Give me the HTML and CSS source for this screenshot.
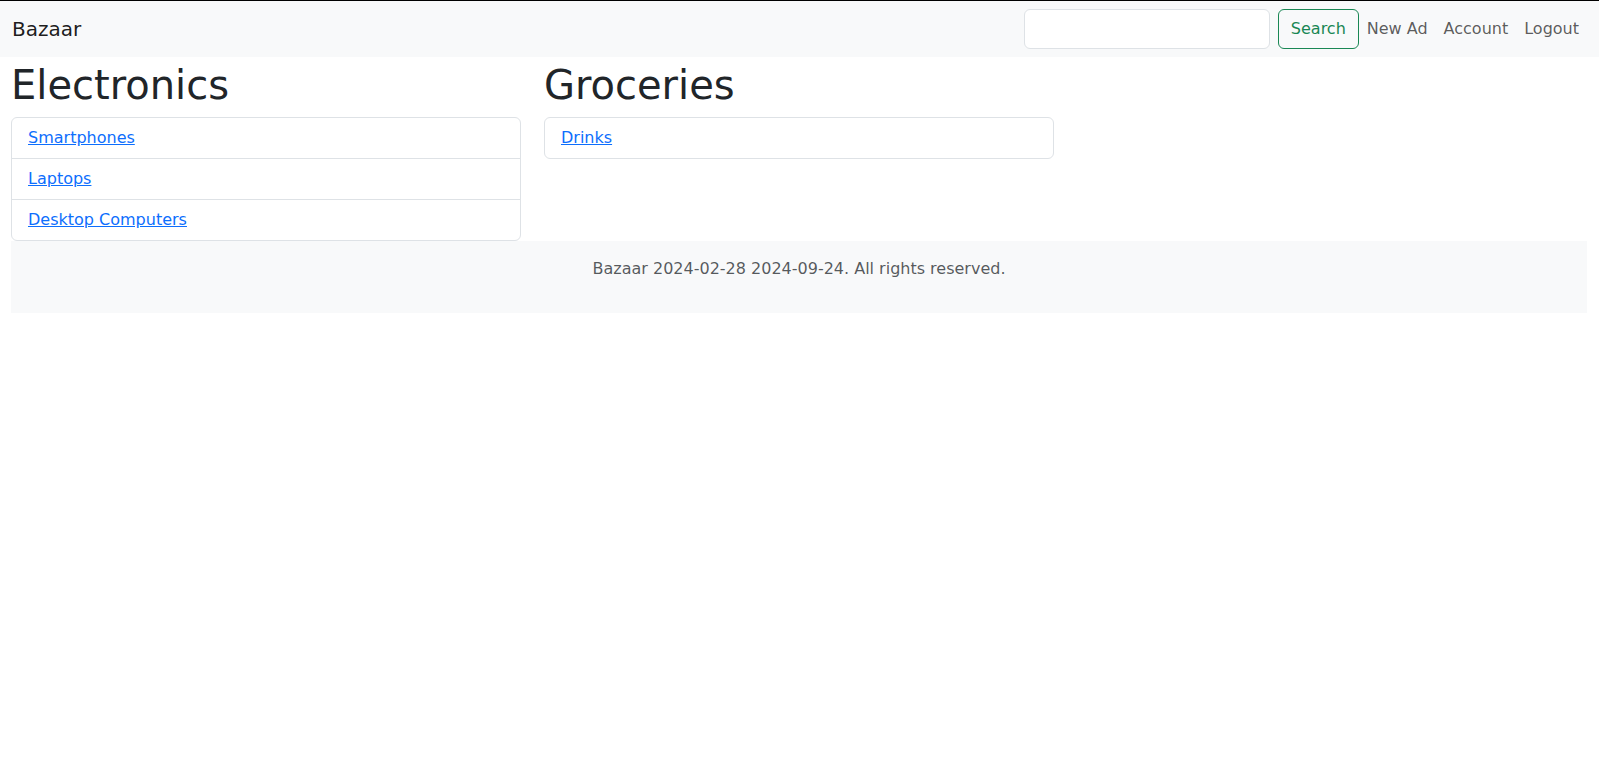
FILE: index.html
```html
<!DOCTYPE html>
<html lang="en">
<head>
<meta charset="utf-8">
<title>Bazaar</title>
<link rel="stylesheet" href="styles.css">
</head>
<body>
<nav class="navbar">
  <div class="nav-inner">
    <a class="brand" href="#">Bazaar</a>
    <div class="nav-right">
      <form class="search">
        <input class="search-input" type="search" aria-label="Search">
        <button class="btn-search" type="button">Search</button>
      </form>
      <ul class="nav-links">
        <li><a class="nav-link" href="#">New Ad</a></li>
        <li><a class="nav-link" href="#">Account</a></li>
        <li><a class="nav-link" href="#">Logout</a></li>
      </ul>
    </div>
  </div>
</nav>
<main class="main">
  <div class="row">
    <section class="col">
      <h1 class="cat-title">Electronics</h1>
      <ul class="list-group">
        <li class="list-item"><a href="#">Smartphones</a></li>
        <li class="list-item"><a href="#">Laptops</a></li>
        <li class="list-item"><a href="#">Desktop Computers</a></li>
      </ul>
    </section>
    <section class="col">
      <h1 class="cat-title">Groceries</h1>
      <ul class="list-group">
        <li class="list-item"><a href="#">Drinks</a></li>
      </ul>
    </section>
    <section class="col"></section>
  </div>
  <footer class="footer">
    <p class="footer-text">Bazaar 2024-02-28 2024-09-24. All rights reserved.</p>
  </footer>
</main>
</body>
</html>
```
FILE: styles.css
```css
* { box-sizing: border-box; }
html, body { margin: 0; padding: 0; }
body {
  font-family: "DejaVu Sans", sans-serif;
  font-size: 16px;
  line-height: 1.5;
  color: #212529;
  background: #fff;
  border-top: 1px solid #000;
}
.navbar {
  background: #f8f9fa;
  padding: 8px 0;
}
.nav-inner {
  display: flex;
  align-items: center;
  justify-content: space-between;
  padding: 0 12px;
  min-height: 40px;
}
.brand {
  font-size: 20px;
  line-height: 30px;
  padding: 5px 0;
  color: rgba(0,0,0,0.9);
  text-decoration: none;
}
.nav-right { display: flex; align-items: center; }
.search { display: flex; align-items: center; margin: 0; }
.search-input {
  width: 246px;
  height: 40px;
  margin-right: 8px;
  border: 1px solid #dee2e6;
  border-radius: 6px;
  background: #fff;
  font: inherit;
  padding: 6px 12px;
}
.btn-search {
  height: 40px;
  padding: 6px 12px;
  font: inherit;
  line-height: 24px;
  color: #198754;
  background: transparent;
  border: 1px solid #198754;
  border-radius: 6px;
}
.nav-links {
  display: flex;
  list-style: none;
  margin: 0;
  padding: 0;
}
.nav-link {
  display: block;
  padding: 8px;
  color: rgba(0,0,0,0.65);
  text-decoration: none;
}
.main { padding: 4px 12px 0 11px; }
.row { display: flex; margin: 0 -12px 0 -11px; }
.col { flex: 0 0 33.3333%; padding: 0 12px 0 11px; }
.cat-title {
  font-size: 40px;
  font-weight: 500;
  line-height: 1.2;
  margin: 0 0 8px;
}
.list-group {
  list-style: none;
  margin: 0;
  padding: 0;
  border: 1px solid #dee2e6;
  border-radius: 6px;
}
.list-item {
  padding: 8px 16px;
  border-top: 1px solid #dee2e6;
}
.list-item:first-child { border-top: 0; }
.list-item a { color: #0d6efd; text-decoration: underline; }
.footer {
  background: #f8f9fa;
  padding: 16px 0;
  text-align: center;
}
.footer-text {
  margin: 0 0 16px;
  color: rgba(33,37,41,0.75);
}
```
